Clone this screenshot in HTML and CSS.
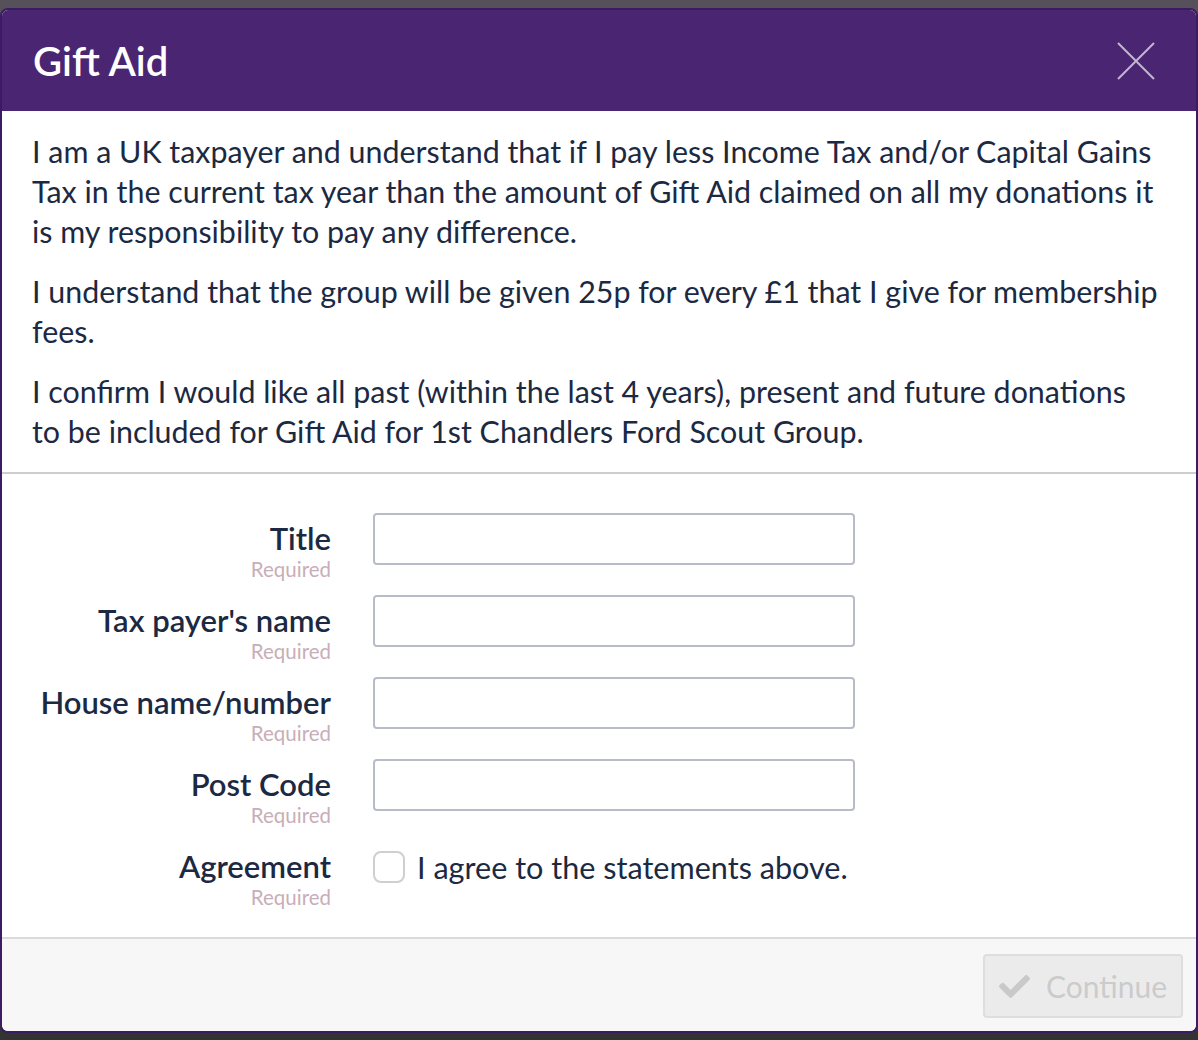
FILE: index.html
```html
<!DOCTYPE html>
<html lang="en">
<head>
    <meta charset="UTF-8">
    <meta name="viewport" content="width=device-width, initial-scale=1.0">
    <title>Gift Aid</title>
    <link rel="stylesheet" href="styles.css">
</head>
<body>

<div class="modal">
    <div class="modal-header">
        <h1>Gift Aid</h1>
        <button class="close-btn" aria-label="Close">
            <svg width="38" height="38" viewBox="0 0 38 38">
                <path d="M1 1 L37 37 M37 1 L1 37" stroke="#c3b6d3" stroke-width="2" fill="none"/>
            </svg>
        </button>
    </div>

    <div class="statement">
        <p>I am a UK taxpayer and understand that if I pay less Income Tax and/or Capital Gains Tax in the current tax year than the amount of Gift Aid claimed on all my donations it is my responsibility to pay any difference.</p>
        <p>I understand that the group will be given 25p for every £1 that I give for membership fees.</p>
        <p>I confirm I would like all past (within the last 4 years), present and future donations to be included for Gift Aid for 1st Chandlers Ford Scout Group.</p>
    </div>

    <form class="details-form">
        <div class="form-row">
            <label class="field-label" for="title">Title<span>Required</span></label>
            <input type="text" class="text-input" id="title">
        </div>
        <div class="form-row">
            <label class="field-label" for="taxName">Tax payer's name<span>Required</span></label>
            <input type="text" class="text-input" id="taxName">
        </div>
        <div class="form-row">
            <label class="field-label" for="house">House name/number<span>Required</span></label>
            <input type="text" class="text-input" id="house">
        </div>
        <div class="form-row">
            <label class="field-label" for="postcode">Post Code<span>Required</span></label>
            <input type="text" class="text-input" id="postcode">
        </div>
        <div class="form-row">
            <label class="field-label" for="agree">Agreement<span>Required</span></label>
            <div class="agree-box">
                <input type="checkbox" class="check-input" id="agree">
                <label for="agree">I agree to the statements above.</label>
            </div>
        </div>
    </form>

    <div class="modal-footer">
        <button class="continue-btn" disabled>
            <svg width="31" height="31" viewBox="0 0 512 512">
                <path fill="#c9c9c9" d="M173.9 439.4l-166.4-166.4c-10-10-10-26.2 0-36.2l36.2-36.2c10-10 26.2-10 36.2 0L192 312.7 432.1 72.6c10-10 26.2-10 36.2 0l36.2 36.2c10 10 10 26.2 0 36.2l-294.4 294.4c-10 10-26.2 10-36.2 0z"/>
            </svg>
            Continue
        </button>
    </div>
</div>

</body>
</html>
```

FILE: styles.css
```css
html, body {
    margin: 0;
    height: 100%;
}
body {
    font-family: Lato, "Open Sans", sans-serif;
    background: linear-gradient(to bottom, #55505a 0, #48444c 40%, #333 100%);
    padding-top: 8px;
    box-sizing: border-box;
    color: #1c2942;
}
.modal {
    background: white;
    border: 2px solid #3b1c62;
    border-radius: 8px;
    overflow: hidden;
}
.modal-header {
    background: #4a2572;
    height: 101px;
    display: flex;
    align-items: center;
    justify-content: space-between;
    padding: 0 41px 0 31px;
}
.modal-header h1 {
    margin: 0;
    color: white;
    font-size: 40px;
    font-weight: 600;
}
.close-btn {
    background: none;
    border: none;
    padding: 0;
    cursor: pointer;
    display: flex;
}
.statement {
    padding: 20px 36px 21px 30px;
    border-bottom: 2px solid #cdcdcd;
}
.statement p {
    margin: 0 0 20px;
    font-size: 30.4px;
    line-height: 40px;
}
.statement p:last-child {
    margin-bottom: 0;
}
.details-form {
    padding: 39px 0 28.5px;
    border-bottom: 2px solid #dadada;
}
.form-row {
    display: flex;
    align-items: flex-start;
    gap: 42px;
    margin-bottom: 14.5px;
}
.form-row:last-child {
    margin-bottom: 0;
}
.field-label {
    width: 329px;
    padding-top: 9px;
    text-align: right;
    font-size: 31px;
    line-height: 32px;
    font-weight: 600;
}
.field-label span {
    display: block;
    margin-top: 3.5px;
    font-size: 20.5px;
    line-height: 23px;
    font-weight: 400;
    color: #c8aeb8;
}
.text-input {
    width: 482px;
    height: 52px;
    box-sizing: border-box;
    border: 2px solid #b8bcc8;
    border-radius: 4px;
    margin: 0;
    font-size: 24px;
    padding: 0 12px;
}
.agree-box {
    height: 52px;
    display: flex;
    align-items: center;
    gap: 12px;
    font-size: 30.6px;
}
.check-input {
    appearance: none;
    width: 32px;
    height: 32px;
    margin: 0;
    border: 2px solid #cfcfcf;
    border-radius: 8px;
    background: white;
}
.modal-footer {
    background: #f7f7f7;
    display: flex;
    justify-content: flex-end;
    padding: 15px 13px 13px;
}
.continue-btn {
    width: 200px;
    height: 64px;
    display: flex;
    align-items: center;
    justify-content: center;
    gap: 16px;
    background: #ebebeb;
    border: 2px solid #dedede;
    border-radius: 4px;
    font-family: Lato, "Open Sans", sans-serif;
    font-size: 30px;
    color: #cbcbcb;
    padding: 0;
}
```
